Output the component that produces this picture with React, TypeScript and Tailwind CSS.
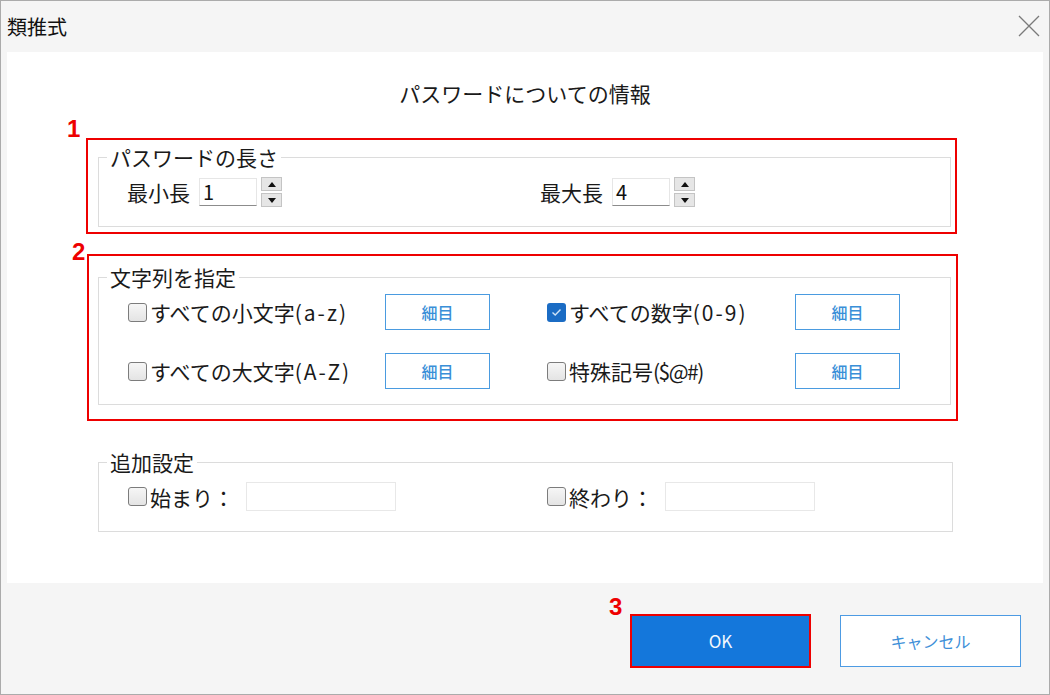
import React from "react";

const FONT = { fontFamily: '"Noto Sans CJK JP", "Noto Sans", sans-serif' };

function Badge({ n, className }: { n: string; className: string }) {
  return (
    <span
      className={"absolute text-[24px] font-bold leading-none text-[#ee0000] " + className}
      style={{ fontFamily: '"Liberation Sans", Arial, sans-serif' }}
    >
      {n}
    </span>
  );
}

function Group({ title, className, children }: { title: string; className: string; children: React.ReactNode }) {
  return (
    <div className={"relative border border-[#dcdcdc] " + className}>
      <span className="absolute -top-[15px] left-[8px] bg-white px-[3px] text-[21px] leading-[28px] text-[#1a1a1a]">
        {title}
      </span>
      {children}
    </div>
  );
}

function Check({ checked = false }: { checked?: boolean }) {
  if (checked) {
    return (
      <span className="flex h-[19px] w-[19px] shrink-0 items-center justify-center rounded-[3px] bg-[#1b6cc4]">
        <svg width="11" height="9" viewBox="0 0 11 9" fill="none">
          <path d="M1.5 4.5 L4.2 7 L9.5 1.5" stroke="#cfe3f7" strokeWidth="1.4" />
        </svg>
      </span>
    );
  }
  return (
    <span className="h-[19px] w-[19px] shrink-0 rounded-[3px] border-[1.5px] border-[#7c7c7c] bg-gradient-to-b from-[#f6f6f6] to-[#e4e4e4]" />
  );
}

function DetailButton() {
  return (
    <button className="flex h-[36px] w-[105px] items-center justify-center border-[1.5px] border-[#4a9be0] bg-white text-[16px] font-medium text-[#3a8fd8]">
      細目
    </button>
  );
}

function Spinner() {
  return (
    <div className="ml-[4px] flex flex-col gap-[2px]">
      <span className="flex h-[14px] w-[21px] items-center justify-center border border-[#c4c4c4] bg-[#e6e6e6]">
        <svg width="8" height="5" viewBox="0 0 8 5">
          <path d="M0 5 L4 0 L8 5 Z" fill="#111" />
        </svg>
      </span>
      <span className="flex h-[14px] w-[21px] items-center justify-center border border-[#c4c4c4] bg-[#e6e6e6]">
        <svg width="8" height="5" viewBox="0 0 8 5">
          <path d="M0 0 L4 5 L8 0 Z" fill="#111" />
        </svg>
      </span>
    </div>
  );
}

function NumberField({ label, value }: { label: string; value: string }) {
  return (
    <div className="flex items-center">
      <span className="text-[21px] leading-[28px] text-[#1a1a1a]">{label}</span>
      <div className="ml-[9px] flex h-[28px] w-[58px] items-center border border-[#e6e6e6] border-b-[#8c8c8c] bg-white pl-[3px] text-[20px] text-[#111]">
        {value}
      </div>
      <Spinner />
    </div>
  );
}

function CharRow({
  label,
  suffix,
  suffixClass,
  checked,
  labelWidth,
}: {
  label: string;
  suffix: string;
  suffixClass: string;
  checked?: boolean;
  labelWidth: string;
}) {
  return (
    <div className="flex items-center">
      <div className={"flex items-center gap-[3px] " + labelWidth}>
        <Check checked={checked} />
        <span className="text-[21px] leading-[28px] text-[#1a1a1a]">
          {label}
          <span className={suffixClass}>{suffix}</span>
        </span>
      </div>
      <DetailButton />
    </div>
  );
}

function AffixRow({ label }: { label: string }) {
  return (
    <div className="flex items-center">
      <div className="flex w-[118px] items-center gap-[3px]">
        <Check />
        <span className="text-[21px] leading-[28px] text-[#1a1a1a]">{label}</span>
      </div>
      <div className="h-[29px] w-[150px] border border-[#e8e8e8] bg-white" />
    </div>
  );
}

export default function App() {
  return (
    <div className="flex h-[695px] w-[1050px] flex-col border border-[#ababab] bg-[#f5f5f5]" style={FONT}>
      {/* Title bar */}
      <div className="flex h-[51px] shrink-0 items-center justify-between pl-[6px] pr-[8px]">
        <span className="text-[20px] leading-[28px] text-[#111]">類推式</span>
        <svg width="24" height="24" viewBox="0 0 24 24" className="mb-[2px]">
          <path d="M2 2 L22 22 M22 2 L2 22" stroke="#7a7a7a" strokeWidth="1.3" />
        </svg>
      </div>

      {/* Content panel */}
      <div className="mx-[6px] h-[531px] shrink-0 bg-white pt-[27px]">
        <h1 className="h-[28px] text-center text-[21px] leading-[28px] text-[#1a1a1a]">パスワードについての情報</h1>

        {/* 1 */}
        <div className="relative ml-[79px] mt-[31px] h-[96px] w-[871px] border-2 border-[#ee0000] pl-[10px] pt-[17px]">
          <Badge n="1" className="-left-[21px] -top-[23px]" />
          <Group title="パスワードの長さ" className="h-[70px] w-[853px] pl-[28px] pt-[19px]">
            <div className="flex">
              <div className="w-[413px]">
                <NumberField label="最小長" value="1" />
              </div>
              <NumberField label="最大長" value="4" />
            </div>
          </Group>
        </div>

        {/* 2 */}
        <div className="relative ml-[80px] mt-[20px] h-[167px] w-[871px] border-2 border-[#ee0000] pl-[9px] pt-[21px]">
          <Badge n="2" className="-left-[17px] -top-[16px]" />
          <Group title="文字列を指定" className="h-[128px] w-[853px] pl-[29px] pt-[16px]">
            <div className="grid grid-cols-[419px_1fr] gap-y-[23px]">
              <CharRow label="すべての小文字" suffix="(a-z)" suffixClass="tracking-[2px]" labelWidth="w-[257px]" />
              <CharRow label="すべての数字" suffix="(0-9)" suffixClass="tracking-[2px]" checked labelWidth="w-[248px]" />
              <CharRow label="すべての大文字" suffix="(A-Z)" suffixClass="tracking-[2px]" labelWidth="w-[257px]" />
              <CharRow label="特殊記号" suffix="($@#)" suffixClass="tracking-[-1.5px]" labelWidth="w-[248px]" />
            </div>
          </Group>
        </div>

        {/* additional */}
        <Group title="追加設定" className="ml-[91px] mt-[41px] h-[70px] w-[855px] pl-[29px] pt-[19px]">
          <div className="flex">
            <div className="w-[419px]">
              <AffixRow label="始まり：" />
            </div>
            <AffixRow label="終わり：" />
          </div>
        </Group>
      </div>

      {/* Footer */}
      <div className="flex flex-1 items-start justify-end gap-[29px] pr-[28px] pt-[31px]">
        <div className="relative">
          <Badge n="3" className="-left-[21px] -top-[19px]" />
          <button className="flex h-[54px] w-[181px] items-center justify-center border-2 border-[#ee0000] bg-[#1477db] text-[17px] text-[#f2f7fd]">
            OK
          </button>
        </div>
        <button className="mt-[1px] flex h-[52px] w-[181px] items-center justify-center border-[1.5px] border-[#4d9be3] bg-white text-[16px] text-[#3d8fd8]">
          キャンセル
        </button>
      </div>
    </div>
  );
}
